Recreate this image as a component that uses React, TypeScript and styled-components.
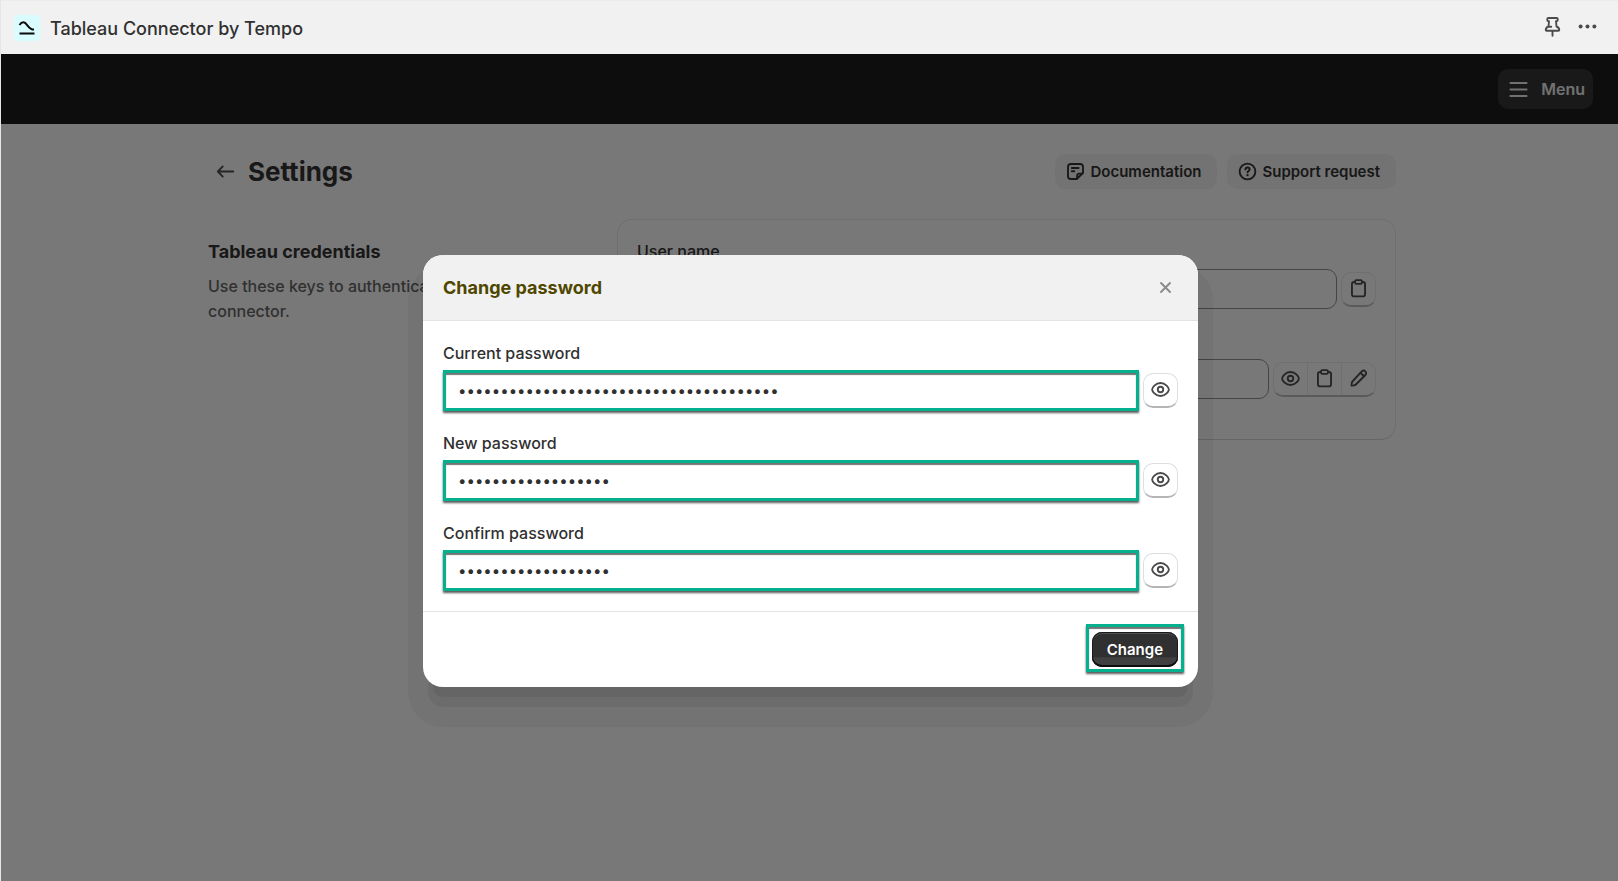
import React, { useState } from "react";
import styled, { createGlobalStyle, css } from "styled-components";

const GlobalStyle = createGlobalStyle`
  *, *::before, *::after { box-sizing: border-box; }
  body {
    margin: 0;
    background: #f1f1f1;
    color: #303030;
    font-family: Inter, "Liberation Sans", sans-serif;
    font-size: 16px;
    font-weight: 450;
    line-height: 25px;
  }
  button, input { font: inherit; color: inherit; }
  h1, h2, p { margin: 0; }
`;

const Shell = styled.div`
  min-height: 100vh;
  display: flex;
  flex-direction: column;
  border-left: 1px solid #e6e6e6;
`;

const AppHeader = styled.header`
  height: 54px;
  display: flex;
  align-items: center;
  gap: 10px;
  padding: 1px 18px 0 13px;
  border-top: 1px solid #ebebeb;
  background: #f1f1f1;
`;

const AppName = styled.span`
  flex: 1;
  font-size: 18px;
`;

const HeaderButton = styled.button`
  display: flex;
  padding: 0 0 3px;
  border: 0;
  background: none;
  color: #4a4a4a;
`;

const Frame = styled.div`
  position: relative;
  flex: 1;
`;

const TopBar = styled.nav`
  height: 70px;
  display: flex;
  align-items: center;
  justify-content: flex-end;
  padding: 0 25px;
  background: #1a1a1a;
`;

const MenuButton = styled.button`
  height: 40px;
  display: flex;
  align-items: center;
  gap: 10px;
  padding: 0 8px;
  border: 0;
  border-radius: 10px;
  background: #323232;
  color: #e3e3e3;
  font-weight: 600;
`;

const Page = styled.main`
  max-width: 1188px;
  margin: 0 auto;
`;

const PageArea = styled.div`
  padding: 30px 15px 0 0;
`;

const TitleRow = styled.div`
  display: flex;
  align-items: center;
  gap: 10px;
  margin-bottom: 30px;
`;

const BackLink = styled.a`
  display: flex;
  padding: 5px 0 5px 5px;
  color: #4a4a4a;
`;

const PageTitle = styled.h1`
  flex: 1;
  font-size: 26px;
  font-weight: 650;
`;

const ActionLink = styled.a`
  height: 35px;
  display: flex;
  align-items: center;
  gap: 2px;
  padding: 0 16px 0 8px;
  border-radius: 10px;
  background: #e6e6e6;
  color: #303030;
  font-size: 15px;
  font-weight: 600;
  text-decoration: none;
`;

const Section = styled.section`
  display: grid;
  grid-template-columns: minmax(0, 389fr) minmax(0, 779fr);
  gap: 20px;
`;

const SectionIntro = styled.div`
  display: grid;
  align-content: start;
  gap: 10px;
  padding-top: 20px;
`;

const SectionTitle = styled.h2`
  font-size: 18px;
  font-weight: 650;
`;

const Muted = styled.p`
  color: #616161;
`;

const Card = styled.div`
  display: grid;
  gap: 20px;
  padding: 19px 19px 40px;
  border: 1px solid #dcdcdc;
  border-bottom-color: #cbcbcb;
  border-radius: 15px;
`;

const Field = styled.div<{ $marked?: boolean }>`
  display: grid;
  gap: ${(p) => (p.$marked ? 4 : 5)}px;
`;

const FieldRow = styled.div`
  display: flex;
  align-items: center;
  gap: 4px;
`;

const frameLine = css`
  border: 3px solid #05b08f;
  box-shadow: 0 2px 2px rgba(0, 0, 0, 0.65), inset 0 2px 1px rgba(0, 0, 0, 0.55);
`;

const TextInput = styled.input<{ $marked?: boolean }>`
  flex: 1;
  min-width: 0;
  height: 40px;
  padding: 0 12px;
  border: 1px solid #8a8a8a;
  border-radius: 10px;
  background: transparent;
  font-size: 15px;
  font-weight: 400;
  outline: none;
  ${(p) => p.$marked && css`height: 41px; border-radius: 0; background: #fff; ${frameLine}`}
`;

const ButtonGroup = styled.div`
  display: flex;
  border: 1px solid #dedede;
  border-bottom: 2px solid #b5b5b5;
  border-radius: 10px;
`;

const IconButton = styled.button`
  width: 33px;
  height: 32px;
  display: flex;
  align-items: center;
  justify-content: center;
  padding: 0;
  border: 0;
  background: none;
  color: #4a4a4a;
  & + & {
    width: 34px;
    border-left: 1px solid #dedede;
  }
`;

const Backdrop = styled.div`
  position: absolute;
  inset: 0;
  display: flex;
  align-items: center;
  justify-content: center;
  padding: 6px 0 0 2px;
  background: rgba(0, 0, 0, 0.5);
`;

const Dialog = styled.div`
  width: 775px;
  max-width: 100%;
  border-radius: 20px;
  background: #fff;
  box-shadow: 0 20px 0 -10px rgba(0, 0, 0, 0.06),
    0 25px 0 -5px rgba(0, 0, 0, 0.06), 0 25px 0 15px rgba(0, 0, 0, 0.04);
`;

const DialogHeader = styled.div`
  height: 66px;
  display: flex;
  align-items: center;
  justify-content: space-between;
  padding: 0 20px;
  border-bottom: 1px solid #e3e3e3;
  border-radius: 20px 20px 0 0;
  background: #f1f1f1;
`;

const DialogTitle = styled.h2`
  color: #4f4700;
  font-size: 18px;
  font-weight: 650;
`;

const CloseButton = styled.button`
  display: flex;
  padding: 0;
  border: 0;
  background: none;
  color: #8a8a8a;
`;

const DialogBody = styled.div`
  display: grid;
  gap: 20px;
  padding: 20px;
`;

const DialogFooter = styled.div`
  display: flex;
  justify-content: flex-end;
  padding: 20px;
  border-top: 1px solid #e3e3e3;
`;

const Highlight = styled.div`
  position: relative;
  &::after {
    content: "";
    position: absolute;
    inset: -8px -6px -5px;
    pointer-events: none;
    ${frameLine}
  }
`;

const PrimaryButton = styled.button`
  display: block;
  height: 35px;
  padding: 0 15px;
  border: 0;
  border-radius: 10px;
  background: linear-gradient(#303030 70%, #404040 74%);
  box-shadow: inset 0 -2px 0 #0d0d0d, inset 0 0 0 1px #1a1a1a,
    inset 0 2px 0 #505050;
  color: #fff;
  font-size: 15px;
  font-weight: 600;
`;

const Icon = styled.svg.attrs({ viewBox: "0 0 20 20", "aria-hidden": true })`
  width: 25px;
  height: 25px;
  flex: none;
  fill: none;
  stroke: currentColor;
  stroke-width: 1.5;
  stroke-linecap: round;
  stroke-linejoin: round;
`;

const EyeIcon = () => (
  <Icon>
    <path d="M3.3 10c0-1.2 2.6-5.2 6.7-5.2s6.7 4 6.7 5.2-2.6 5.2-6.7 5.2S3.3 11.2 3.3 10Z" />
    <circle cx="10" cy="10" r="2.2" />
  </Icon>
);

const ClipboardIcon = () => (
  <Icon>
    <path d="M7.2 4.75h-.7c-1 0-1.75.75-1.75 1.75v8c0 1 .75 1.75 1.75 1.75h7c1 0 1.75-.75 1.75-1.75v-8c0-1-.75-1.75-1.75-1.75h-.7" />
    <rect x="7.25" y="3.25" width="5.5" height="3" rx="1" />
  </Icon>
);

const PencilIcon = () => (
  <Icon>
    <path d="M12.6 4.3a2 2 0 0 1 2.9 2.9l-7.4 7.4c-.5.5-1.1.8-1.8.9l-1.9.2.2-1.9c.1-.7.4-1.3.9-1.8Z" />
    <path d="m11.8 5.6 2.6 2.6" />
  </Icon>
);

const NoteIcon = () => (
  <Icon>
    <path d="M11 16H6.3C5 16 4 15 4 13.7V6.3C4 5 5 4 6.3 4h7.4C15 4 16 5 16 6.3V11Z" />
    <path d="M11.3 15.5v-2.2c0-.9.7-1.6 1.6-1.6h2.6M7 7.2h5.5M7 9.8h2" />
  </Icon>
);

const HelpIcon = () => (
  <Icon>
    <circle cx="10" cy="10" r="6.3" />
    <path d="M8.3 8.3c0-.9.7-1.5 1.7-1.5s1.7.7 1.7 1.5c0 1.2-1.7 1.3-1.7 2.4" />
    <circle cx="10" cy="12.9" r=".9" fill="currentColor" stroke="none" />
  </Icon>
);

const ArrowLeftIcon = () => (
  <Icon>
    <path d="M16.2 10H4.2M7.8 5.9 3.9 10l3.9 4.1" />
  </Icon>
);

const PinIcon = () => (
  <Icon>
    <path d="M6.8 3.200h6.400c.6 0 1 .4 1 1v.5c0 .5-.3.900-.8 1l-.6.100.4 4.200c1.300.5 2.200 1.500 2.200 2.700 0 .4-.3.700-.7.700H5.300c-.4 0-.7-.3-.7-.7 0-1.200.9-2.200 2.200-2.700l.4-4.200-.6-.100c-.5-.1-.8-.5-.8-1v-.5c0-.6.4-1 1-1Z" />
    <path d="M10 13.600V17.400M7.500 10.200h1.500" />
  </Icon>
);

const DotsIcon = () => (
  <Icon>
    <g fill="currentColor" stroke="none">
      <circle cx="4.5" cy="10" r="1.6" />
      <circle cx="10" cy="10" r="1.6" />
      <circle cx="15.5" cy="10" r="1.6" />
    </g>
  </Icon>
);

const MenuIcon = () => (
  <Icon>
    <path d="M3.5 4.8h13M3.5 10h13M3.5 15.2h13" />
  </Icon>
);

const CloseIcon = () => (
  <Icon>
    <path d="m6.400 6.400 7.200 7.200m0-7.200-7.200 7.200" />
  </Icon>
);

const Logo = () => (
  <svg width="26" height="26" viewBox="0 0 26 26" aria-hidden="true">
    <rect width="26" height="26" rx="4" fill="#d9fcff" />
    <path
      d="M5.500 10c1.200-1.900 2.600-2.700 4-2.700 3.800 0 4.300 7.300 10.500 7.300M5.500 18.400H20.500"
      fill="none"
      stroke="#0a0a0a"
      strokeWidth="2"
    />
  </svg>
);

interface PasswordFieldProps {
  id: string;
  label: string;
  length: number;
}

function PasswordField({ id, label, length }: PasswordFieldProps) {
  const [value, setValue] = useState("x".repeat(length));
  const [shown, setShown] = useState(false);
  return (
    <Field $marked>
      <label htmlFor={id}>{label}</label>
      <FieldRow>
        <TextInput
          $marked
          id={id}
          type={shown ? "text" : "password"}
          value={value}
          onChange={(e) => setValue(e.target.value)}
        />
        <ButtonGroup>
          <IconButton type="button" aria-label={`Show ${label}`} onClick={() => setShown(!shown)}>
            <EyeIcon />
          </IconButton>
        </ButtonGroup>
      </FieldRow>
    </Field>
  );
}

export default function App() {
  return (
    <Shell>
      <GlobalStyle />
      <AppHeader>
        <Logo />
        <AppName>Tableau Connector by Tempo</AppName>
        <HeaderButton aria-label="Pin"><PinIcon /></HeaderButton>
        <HeaderButton aria-label="More actions"><DotsIcon /></HeaderButton>
      </AppHeader>
      <Frame>
        <TopBar>
          <MenuButton><MenuIcon />Menu</MenuButton>
        </TopBar>
        <PageArea>
          <Page>
            <TitleRow>
              <BackLink href="#" aria-label="Back"><ArrowLeftIcon /></BackLink>
              <PageTitle>Settings</PageTitle>
              <ActionLink href="#"><NoteIcon />Documentation</ActionLink>
              <ActionLink href="#"><HelpIcon />Support request</ActionLink>
            </TitleRow>
            <Section>
              <SectionIntro>
                <SectionTitle>Tableau credentials</SectionTitle>
                <Muted>Use these keys to authenticate in the Tableau connector.</Muted>
              </SectionIntro>
              <Card>
                <Field>
                  <label htmlFor="user-name">User name</label>
                  <FieldRow>
                    <TextInput id="user-name" readOnly />
                    <ButtonGroup>
                      <IconButton aria-label="Copy user name"><ClipboardIcon /></IconButton>
                    </ButtonGroup>
                  </FieldRow>
                </Field>
                <Field>
                  <label htmlFor="password">Password</label>
                  <FieldRow>
                    <TextInput id="password" type="password" readOnly />
                    <ButtonGroup>
                      <IconButton aria-label="Show password"><EyeIcon /></IconButton>
                      <IconButton aria-label="Copy password"><ClipboardIcon /></IconButton>
                      <IconButton aria-label="Edit password"><PencilIcon /></IconButton>
                    </ButtonGroup>
                  </FieldRow>
                </Field>
              </Card>
            </Section>
          </Page>
        </PageArea>
        <Backdrop>
          <Dialog role="dialog" aria-modal="true" aria-labelledby="dialog-title">
            <DialogHeader>
              <DialogTitle id="dialog-title">Change password</DialogTitle>
              <CloseButton aria-label="Close"><CloseIcon /></CloseButton>
            </DialogHeader>
            <DialogBody>
              <PasswordField id="current" label="Current password" length={38} />
              <PasswordField id="new" label="New password" length={18} />
              <PasswordField id="confirm" label="Confirm password" length={18} />
            </DialogBody>
            <DialogFooter>
              <Highlight>
                <PrimaryButton type="button">Change</PrimaryButton>
              </Highlight>
            </DialogFooter>
          </Dialog>
        </Backdrop>
      </Frame>
    </Shell>
  );
}
